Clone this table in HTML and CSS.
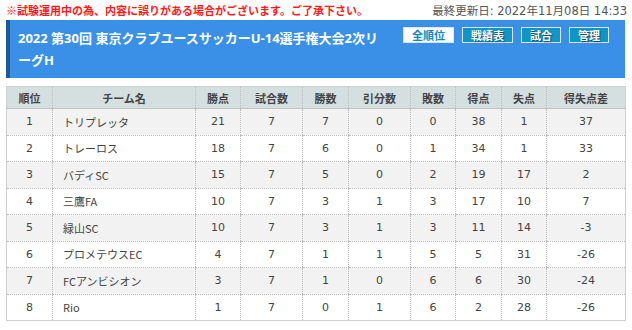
FILE: index.html
```html
<!DOCTYPE html>
<html lang="ja">
<head>
<meta charset="utf-8">
<link rel="stylesheet" href="styles.css">
</head>
<body>
<div class="page">
  <div class="topline">
    <span class="notice">※試験運用中の為、内容に誤りがある場合がございます。ご了承下さい。</span>
    <span class="updated">最終更新日: 2022年11月08日 14:33</span>
  </div>
  <div class="titlebar">
    <h1 class="title">2022 第30回 東京クラブユースサッカーU-14選手権大会2次リーグH</h1>
    <div class="btns">
      <a class="btn active">全順位</a>
      <a class="btn">戦績表</a>
      <a class="btn">試合</a>
      <a class="btn">管理</a>
    </div>
  </div>
  <table class="standings">
    <colgroup>
      <col class="c1"><col class="c2"><col class="c3"><col class="c4"><col class="c5">
      <col class="c6"><col class="c7"><col class="c8"><col class="c9"><col class="c10">
    </colgroup>
    <thead>
      <tr><th>順位</th><th>チーム名</th><th>勝点</th><th>試合数</th><th>勝数</th><th>引分数</th><th>敗数</th><th>得点</th><th>失点</th><th>得失点差</th></tr>
    </thead>
    <tbody>
      <tr><td>1</td><td class="team">トリプレッタ</td><td>21</td><td>7</td><td>7</td><td>0</td><td>0</td><td>38</td><td>1</td><td>37</td></tr>
      <tr><td>2</td><td class="team">トレーロス</td><td>18</td><td>7</td><td>6</td><td>0</td><td>1</td><td>34</td><td>1</td><td>33</td></tr>
      <tr><td>3</td><td class="team">バディSC</td><td>15</td><td>7</td><td>5</td><td>0</td><td>2</td><td>19</td><td>17</td><td>2</td></tr>
      <tr><td>4</td><td class="team">三鷹FA</td><td>10</td><td>7</td><td>3</td><td>1</td><td>3</td><td>17</td><td>10</td><td>7</td></tr>
      <tr><td>5</td><td class="team">緑山SC</td><td>10</td><td>7</td><td>3</td><td>1</td><td>3</td><td>11</td><td>14</td><td>-3</td></tr>
      <tr><td>6</td><td class="team">プロメテウスEC</td><td>4</td><td>7</td><td>1</td><td>1</td><td>5</td><td>5</td><td>31</td><td>-26</td></tr>
      <tr><td>7</td><td class="team">FCアンビシオン</td><td>3</td><td>7</td><td>1</td><td>0</td><td>6</td><td>6</td><td>30</td><td>-24</td></tr>
      <tr><td>8</td><td class="team">Rio</td><td>1</td><td>7</td><td>0</td><td>1</td><td>6</td><td>2</td><td>28</td><td>-26</td></tr>
    </tbody>
  </table>
</div>
</body>
</html>
```
FILE: styles.css
```css
html, body {
  margin: 0;
  padding: 0;
  background: #ffffff;
}
body {
  font-family: "DejaVu Sans", "Noto Sans CJK JP", sans-serif;
  font-size: 11px;
  color: #333333;
}
.page {
  padding: 1px 7px 0 6px;
}
.topline {
  display: flex;
  justify-content: space-between;
  align-items: center;
  height: 17px;
  font-family: "Noto Sans CJK JP", sans-serif;
}
.notice {
  color: #ff1a1a;
  font-weight: bold;
  font-size: 11px;
}
.updated {
  color: #555555;
  font-size: 11.5px;
  font-family: "DejaVu Sans", "Noto Sans CJK JP", sans-serif;
  margin-right: -2px;
}
.titlebar {
  margin-top: 2px;
  display: flex;
  align-items: flex-start;
  background: #3a8fe6;
  border-left: 4px solid #1a5a9c;
  height: 58px;
  box-sizing: border-box;
  padding: 7px 16px 7px 8px;
}
.title {
  flex: 1;
  margin: 0;
  color: #ffffff;
  font-family: "Noto Sans", "Noto Sans CJK JP", sans-serif;
  font-size: 13px;
  font-weight: bold;
  line-height: 22px;
  padding-right: 22px;
}
.btns {
  display: flex;
  gap: 8px;
  margin-top: 0;
}
.btn {
  display: block;
  height: 16px;
  box-sizing: border-box;
  border: 1px solid #dde6ee;
  background: #0e96c7;
  color: #ffffff;
  font-family: "Noto Sans CJK JP", sans-serif;
  font-size: 11px;
  font-weight: bold;
  line-height: 14px;
  padding: 0 8px;
  text-shadow: 1px 1px 1px #1d3e55;
  white-space: nowrap;
}
.btn.active {
  background: #ffffff;
  color: #1189c0;
  text-shadow: none;
}
.standings {
  margin-top: 8px;
  width: 619px;
  border-collapse: collapse;
  table-layout: fixed;
  border: 1px solid #cfcfcf;
}
.c1 { width: 46px; }
.c2 { width: 143px; }
.c3 { width: 45px; }
.c4 { width: 62px; }
.c5 { width: 46px; }
.c6 { width: 62px; }
.c7 { width: 45px; }
.c8 { width: 46px; }
.c9 { width: 45px; }
.c10 { width: 79px; }
.standings th {
  background: #d4dfe0;
  color: #444444;
  font-family: "Noto Sans CJK JP", sans-serif;
  font-weight: bold;
  font-size: 11px;
  height: 21px;
  padding: 0;
  border-left: 1px dotted #bdbdbd;
  border-bottom: 1px solid #c4c4c4;
  text-align: center;
}
.standings td {
  height: 25.5px;
  padding: 0;
  text-align: center;
  border-left: 1px dotted #bdbdbd;
  border-bottom: 1px dotted #bdbdbd;
  font-size: 11px;
  color: #444444;
}
.standings tr > :first-child {
  border-left: none;
}
.standings tbody tr:nth-child(odd) td {
  background: #f2f2f2;
}
.standings td.team {
  text-align: left;
  padding-left: 10px;
  font-family: "Noto Sans CJK JP", sans-serif;
}
```
